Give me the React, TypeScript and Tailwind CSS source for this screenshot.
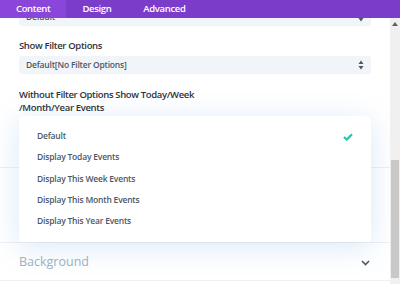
import React from "react";

const font = { fontFamily: '"Open Sans", "Noto Sans", sans-serif' };

function UpDown() {
  return (
    <svg width="6" height="10" viewBox="0 0 6 10" className="shrink-0">
      <path d="M3 0.5 L5.5 4 L0.5 4 Z" fill="#4c5866" />
      <path d="M3 9.5 L5.5 6 L0.5 6 Z" fill="#4c5866" />
    </svg>
  );
}

export default function App() {
  const items = [
    "Default",
    "Display Today Events",
    "Display This Week Events",
    "Display This Month Events",
    "Display This Year Events",
  ];
  return (
    <div className="w-[400px] h-[284px] flex flex-col overflow-hidden bg-white" style={font}>
      <div className="h-[18px] flex bg-[#7b3dc9] text-white text-[9.5px] tracking-[-0.35px] font-semibold leading-[18px] shrink-0">
        <div className="px-[16px] bg-[#8a45da]">Content</div>
        <div className="px-[16px]">Design</div>
        <div className="px-[16px]">Advanced</div>
      </div>
      <div className="flex flex-1 min-h-0">
        <div className="relative w-[390px] overflow-hidden flex flex-col">
          <div className="px-[19px] flex flex-col">
            <div className="mt-[-10px] h-[18px] bg-[#f1f4f9] rounded-[3px] flex items-center px-[7px] justify-between">
              <span className="text-[8.5px] tracking-[-0.2px] font-semibold text-[#4c5866]">Default</span>
              <UpDown />
            </div>
            <div className="mt-[12px] h-[16px] leading-[16px] text-[9.5px] tracking-[-0.35px] font-semibold text-[#2e3338]">
              Show Filter Options
            </div>
            <div className="mt-[2px] h-[18px] bg-[#f1f4f9] rounded-[3px] flex items-center px-[7px] justify-between">
              <span className="text-[8.5px] tracking-[-0.2px] font-semibold text-[#4c5866]">Default[No Filter Options]</span>
              <UpDown />
            </div>
            <div className="mt-[14px] leading-[13px] text-[9.5px] tracking-[-0.35px] font-semibold text-[#2e3338]">
              Without Filter Options Show Today/Week
              <br />
              /Month/Year Events
            </div>
            <div className="mt-[2px] h-[18px] bg-[#f1f4f9] rounded-[3px]" />
          </div>
          <div className="mt-[33px] border-t border-[#eef0f3] h-[75px]" />
          <div className="border-t border-[#eef0f3] h-[38px] flex items-center justify-between px-[19px] pt-[2px]">
            <span className="text-[12.5px] text-[#a3b0c2]">Background</span>
            <svg width="9" height="6" viewBox="0 0 9 6" className="mr-[1px]">
              <path d="M1 1 L4.5 4.5 L8 1" stroke="#4c5866" strokeWidth="1.6" fill="none" />
            </svg>
          </div>
          <div className="border-t border-[#eef0f3]" />

          <div className="absolute left-[19px] top-[98px] w-[352px] h-[126px] bg-white rounded-[3px] shadow-[0_5px_30px_rgba(43,135,218,0.18)] py-[10px] flex flex-col">
            {items.map((t, i) => (
              <div key={t} className="h-[21.2px] flex items-center justify-between pl-[18px] pr-[18px]">
                <span className="text-[8.5px] tracking-[-0.2px] font-semibold text-[#4c5866]">{t}</span>
                {i === 0 && (
                  <svg width="10" height="8" viewBox="0 0 10 8">
                    <path d="M1 4 L3.8 6.6 L9 1.2" stroke="#2ec4a6" strokeWidth="2.2" fill="none" />
                  </svg>
                )}
              </div>
            ))}
          </div>
        </div>
        <div className="w-[10px] bg-[#f0f0f0] flex flex-col items-center">
          <svg width="6" height="4" viewBox="0 0 6 4" className="mt-[4px]">
            <path d="M3 0 L6 4 L0 4 Z" fill="#606060" />
          </svg>
          <div className="mt-[134px] w-[8px] h-[118px] bg-[#c8c8c8]" />
        </div>
      </div>
    </div>
  );
}
